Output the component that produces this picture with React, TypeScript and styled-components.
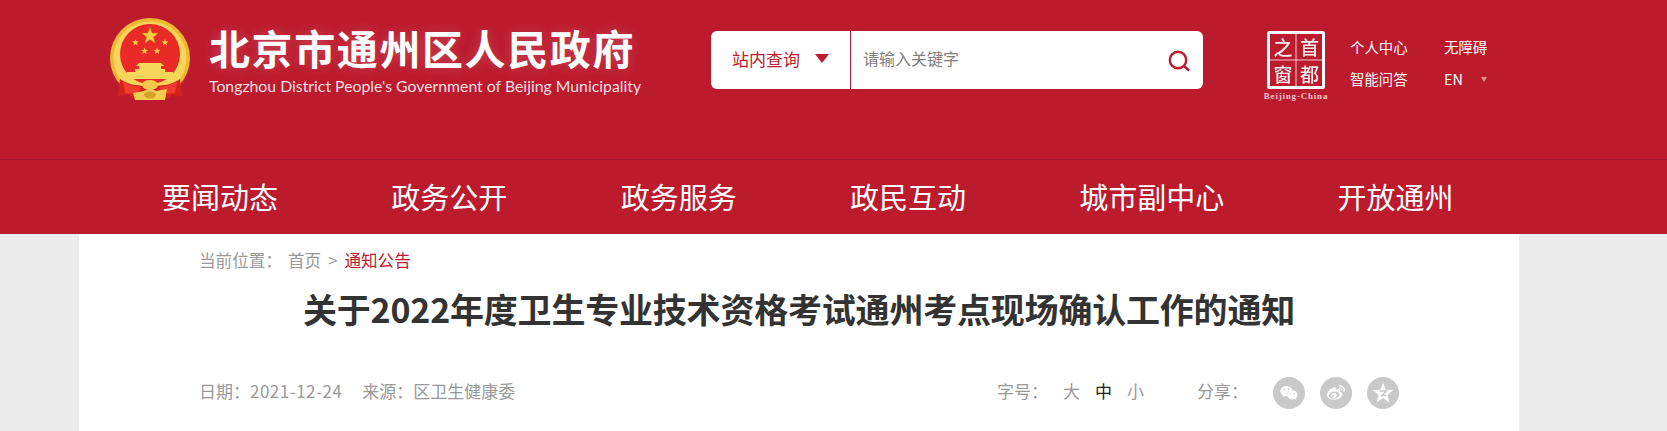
import styled, { createGlobalStyle } from 'styled-components'
import { FaWeibo, FaWeixin } from 'react-icons/fa'

const RED = '#bc1b2e'
const FONT = '"Noto Sans CJK SC", "Noto Sans", sans-serif'

const navItems = ['要闻动态', '政务公开', '政务服务', '政民互动', '城市副中心', '开放通州']

const GlobalStyle = createGlobalStyle`
  html, body {
    margin: 0;
    height: 431px;
    overflow: hidden;
    background: #ececec;
    font-family: ${FONT};
  }
`

const Header = styled.header`
  background: ${RED};
`

const TopBar = styled.div`
  height: 159px;
  border-bottom: 1px solid #a2142a;
  display: flex;
  align-items: flex-start;
  box-sizing: content-box;
`

const Brand = styled.div`
  display: flex;
  margin: 16px 0 0 108px;
  width: 603px;
`

const BrandText = styled.div`
  margin-left: 17px;
  color: #fff;
`

const BrandName = styled.div`
  font-size: 41px;
  line-height: 50px;
  margin-top: 6px;
  font-weight: 700;
  letter-spacing: 1.6px;
  white-space: nowrap;
  text-shadow: 0 0 12px rgba(255, 255, 255, 0.18);
`

const BrandEnglish = styled.div`
  font-family: Lato, "Noto Sans", sans-serif;
  font-size: 15.8px;
  line-height: 20px;
  margin-top: 4px;
  color: #f5dfe2;
  white-space: nowrap;
`

const Search = styled.div`
  display: flex;
  align-items: center;
  width: 492px;
  height: 58px;
  margin-top: 31px;
  background: #fff;
  border-radius: 6px;
`

const ScopeSelect = styled.div`
  flex: 0 0 140px;
  height: 100%;
  box-sizing: border-box;
  border-right: 1px solid ${RED};
  display: flex;
  align-items: center;
  padding: 0 0 4px 21px;
  color: ${RED};
  font-size: 17px;
`

const Caret = styled.i<{ $size: number; $color: string }>`
  display: block;
  width: 0;
  height: 0;
  border-left: ${(p) => p.$size}px solid transparent;
  border-right: ${(p) => p.$size}px solid transparent;
  border-top: ${(p) => p.$size + 2}px solid ${(p) => p.$color};
`

const ScopeCaret = styled(Caret)`
  margin-left: 15px;
`

const Placeholder = styled.div`
  flex: 1;
  padding: 0 0 4px 12px;
  color: #808080;
  font-size: 16px;
`

const SearchIcon = styled.svg`
  width: 24px;
  height: 24px;
  margin-right: 12px;
  margin-top: 1px;
`

const CapitalLogo = styled.svg`
  width: 68px;
  height: 74px;
  margin: 31px 0 0 59px;
`

const Links = styled.div`
  display: grid;
  grid-template-columns: 94px auto;
  grid-auto-rows: 32px;
  margin: 31px 0 0 20px;
  color: #fff;
  font-size: 14.4px;
  line-height: 32px;
`

const Lang = styled.div`
  display: flex;
  align-items: center;
`

const LangCaret = styled(Caret)`
  margin-left: 18px;
  opacity: 0.7;
`

const Nav = styled.nav`
  height: 74px;
  display: flex;
  align-items: center;
  gap: 113.3px;
  padding: 0 0 2px 162px;
  box-sizing: border-box;
`

const NavItem = styled.a`
  color: #fff;
  font-size: 29px;
  white-space: nowrap;
`

const Article = styled.main`
  width: 1440px;
  height: 197px;
  margin-left: 79px;
  background: #fff;
  padding: 0 120px;
  box-sizing: border-box;
`

const Crumbs = styled.div`
  display: flex;
  height: 50px;
  padding-top: 14px;
  box-sizing: border-box;
  color: #999;
  font-size: 16.6px;
  line-height: 24px;
`

const CrumbLabel = styled.span`
  width: 89px;
`

const CrumbSep = styled.span`
  margin: 0 7px;
`

const CrumbActive = styled.span`
  color: ${RED};
`

const Title = styled.h1`
  margin: 0;
  font-size: 34px;
  line-height: 50px;
  font-weight: 700;
  letter-spacing: -0.2px;
  color: #333;
  text-align: center;
  white-space: nowrap;
`

const Meta = styled.div`
  display: flex;
  align-items: center;
  justify-content: space-between;
  margin-top: 41px;
  color: #999;
  font-size: 17px;
  line-height: 32px;
`

const Source = styled.div`
  display: flex;
  gap: 20px;
  padding-bottom: 3px;
`

const DateValue = styled.span`
  letter-spacing: 0.5px;
`

const Tools = styled.div`
  display: flex;
  align-items: center;
`

const ToolLabel = styled.span<{ $width: number }>`
  width: ${(p) => p.$width}px;
  padding-bottom: 3px;
`

const SizeOption = styled.span<{ $active?: boolean }>`
  width: 32px;
  padding-bottom: 3px;
  color: ${(p) => (p.$active ? '#222' : '#999')};
`

const ShareLabel = styled(ToolLabel)`
  margin-left: 38px;
`

const ShareCircle = styled.span`
  width: 32px;
  height: 32px;
  border-radius: 50%;
  margin-right: 15px;
  background: #c9c9c9;
  color: #fff;
  display: flex;
  align-items: center;
  justify-content: center;
  font-size: 18px;

  &:last-child {
    margin-right: 0;
  }
`

const Star = (cx: number, cy: number, r: number) => {
  const pts = Array.from({ length: 10 }, (_, i) => {
    const a = (Math.PI / 5) * i - Math.PI / 2
    const d = i % 2 ? r * 0.42 : r
    return `${(cx + d * Math.cos(a)).toFixed(2)},${(cy + d * Math.sin(a)).toFixed(2)}`
  })
  return pts.join(' ')
}

const Emblem = () => (
  <svg width="84" height="90" viewBox="108 16 84 90">
    <defs>
      <filter id="soft">
        <feGaussianBlur stdDeviation="0.35" />
      </filter>
      <radialGradient id="halo">
        <stop offset="0.75" stopColor="#fff" stopOpacity="0.1" />
        <stop offset="1" stopColor="#fff" stopOpacity="0" />
      </radialGradient>
    </defs>
    <circle cx="150" cy="60" r="42" fill="url(#halo)" />
    <g filter="url(#soft)">
      <circle cx="150" cy="58" r="40" fill="#eeb92f" />
      <circle cx="150" cy="58" r="36.5" fill="#f7d55c" />
      <circle cx="150" cy="54" r="30" fill="#e92c25" />
      <polygon points={Star(150, 36, 8.5)} fill="#f8d03e" stroke="#c98a1e" strokeWidth="0.5" />
      <polygon points={Star(135.5, 42.5, 3.6)} fill="#f8d03e" />
      <polygon points={Star(165, 42.5, 3.6)} fill="#f8d03e" />
      <polygon points={Star(144.5, 51, 3.6)} fill="#f8d03e" />
      <polygon points={Star(157, 51, 3.6)} fill="#f8d03e" />
      <path d="M139 63h22l3 3h-3v3h4v3h-30v-3h4v-3h-3z" fill="#f8d65a" />
      <rect x="127" y="72" width="46" height="3" fill="#f8d65a" />
      <rect x="122" y="75" width="56" height="4" fill="#f8d65a" />
      <path d="M120 79c8 5 14 7 30 7s22-2 30-7l2 17-10-1-4 3h-36l-4-3-10 1z" fill="#d6241f" />
      <path d="M123 81c6 4 12 6 18 6l-4 7-12-1z" fill="#f03a2e" />
      <path d="M177 81c-6 4-12 6-18 6l4 7 12-1z" fill="#f03a2e" />
      <ellipse cx="150" cy="85" rx="8" ry="5" fill="#f4c94a" />
      <path d="M133 93l11-2 6-3 6 3 11-2-2 11h-30z" fill="#f4cc50" />
      <ellipse cx="150" cy="95" rx="6" ry="3.5" fill="#d6a227" />
    </g>
  </svg>
)

const App = () => (
  <>
    <GlobalStyle />
    <Header>
      <TopBar>
        <Brand>
          <Emblem />
          <BrandText>
            <BrandName>北京市通州区人民政府</BrandName>
            <BrandEnglish>Tongzhou District People's Government of Beijing Municipality</BrandEnglish>
          </BrandText>
        </Brand>
        <Search>
          <ScopeSelect>
            站内查询
            <ScopeCaret $size={7} $color={RED} />
          </ScopeSelect>
          <Placeholder>请输入关键字</Placeholder>
          <SearchIcon viewBox="0 0 24 24" fill="none" stroke={RED} strokeWidth="2.4">
            <circle cx="11" cy="11" r="8.2" />
            <path d="M17 17l4.5 4" strokeLinecap="round" />
          </SearchIcon>
        </Search>
        <CapitalLogo viewBox="0 0 68 74">
          <rect x="6.5" y="1.5" width="55" height="55" fill="none" stroke="#fff" strokeWidth="3" rx="1" />
          <path d="M34 3v52M8 29h52" stroke="#f3c9ce" strokeWidth="1" />
          <g fill="#fff" fontFamily={FONT} fontSize="19" fontWeight="500" textAnchor="middle" opacity="0.92">
            <text x="21" y="24">之</text>
            <text x="47.5" y="24">首</text>
            <text x="21" y="51">窗</text>
            <text x="47.5" y="51">都</text>
          </g>
          <text
            x="34"
            y="68"
            fill="#f0c6cc"
            fontFamily="Liberation Serif, serif"
            fontSize="9"
            fontWeight="700"
            textAnchor="middle"
            letterSpacing="0.8"
          >
            Beijing-China
          </text>
        </CapitalLogo>
        <Links>
          <span>个人中心</span>
          <span>无障碍</span>
          <span>智能问答</span>
          <Lang>
            EN
            <LangCaret $size={3} $color="#f3c9a8" />
          </Lang>
        </Links>
      </TopBar>
      <Nav>
        {navItems.map((item) => (
          <NavItem key={item}>{item}</NavItem>
        ))}
      </Nav>
    </Header>
    <Article>
      <Crumbs>
        <CrumbLabel>当前位置：</CrumbLabel>
        <span>首页</span>
        <CrumbSep>&gt;</CrumbSep>
        <CrumbActive>通知公告</CrumbActive>
      </Crumbs>
      <Title>关于2022年度卫生专业技术资格考试通州考点现场确认工作的通知</Title>
      <Meta>
        <Source>
          <span>
            日期：<DateValue>2021-12-24</DateValue>
          </span>
          <span>来源：区卫生健康委</span>
        </Source>
        <Tools>
          <ToolLabel $width={66}>字号：</ToolLabel>
          <SizeOption>大</SizeOption>
          <SizeOption $active>中</SizeOption>
          <SizeOption>小</SizeOption>
          <ShareLabel $width={76}>分享：</ShareLabel>
          <ShareCircle>
            <FaWeixin />
          </ShareCircle>
          <ShareCircle>
            <FaWeibo />
          </ShareCircle>
          <ShareCircle>
            <svg width="22" height="22" viewBox="0 0 22 22">
              <polygon points={Star(11, 11.5, 11)} fill="#fff" />
              <path d="M7.5 9h7l-4.5 4.5h4.5" fill="none" stroke="#c9c9c9" strokeWidth="1.6" />
            </svg>
          </ShareCircle>
        </Tools>
      </Meta>
    </Article>
  </>
)

export default App
